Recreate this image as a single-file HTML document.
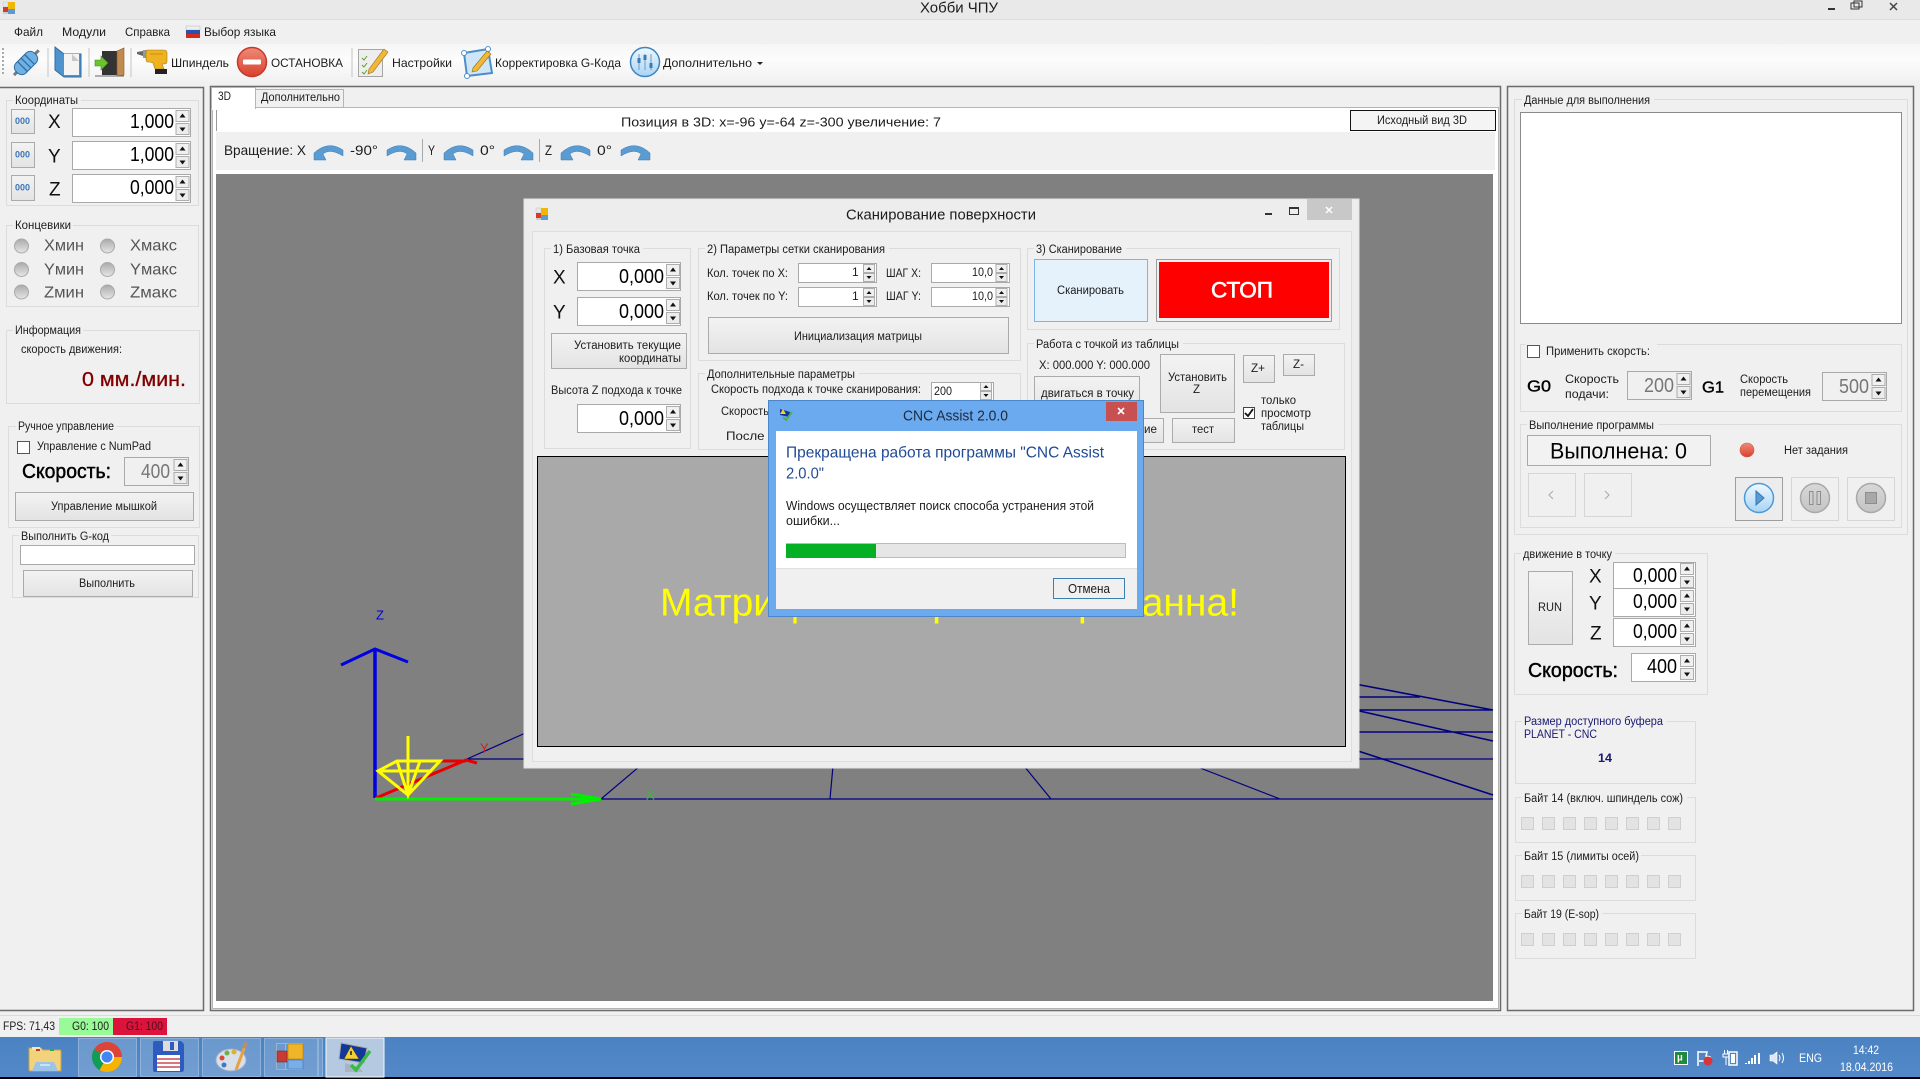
<!DOCTYPE html>
<html lang="ru"><head><meta charset="utf-8"><title>Хобби ЧПУ</title>
<style>
html,body{margin:0;padding:0;background:#f0f0f0;overflow:hidden}
svg{display:block;font-family:"Liberation Sans","Noto Sans CJK SC",sans-serif}
text{dominant-baseline:central;font-size:12px;fill:#1c1c1c}
.g{fill:none;stroke:#dcdcdc}
.b{fill:url(#btn);stroke:#ababab}
.i{fill:#fff;stroke:#a9a9a9}
.n{font-size:20px;fill:#000;transform:translateY(1px)}
.d{font-size:20px;fill:#777;transform:translateY(1px)}
.a{font-size:19px;fill:#111;transform:translateY(1px)}
.l{font-size:16px;fill:#555}
.s{font-size:11.5px;transform:translateY(1px)}
.m{font-size:20px;fill:#000;stroke:#000;stroke-width:.45px}
.nv{stroke:#000080;fill:none}
</style></head><body>
<svg width="1920" height="1079" viewBox="0 0 1920 1079" xmlns="http://www.w3.org/2000/svg">
<defs>
<linearGradient id="btn" x1="0" y1="0" x2="0" y2="1"><stop offset="0" stop-color="#f3f3f3"/><stop offset="1" stop-color="#e3e3e3"/></linearGradient>
<linearGradient id="tb" x1="0" y1="0" x2="0" y2="1"><stop offset="0" stop-color="#f6f6f6"/><stop offset=".4" stop-color="#fcfcfc"/><stop offset="1" stop-color="#f0f0f0"/></linearGradient>
<linearGradient id="ro" x1="0" y1="0" x2="0" y2="1"><stop offset="0" stop-color="#f08a78"/><stop offset="1" stop-color="#d9402e"/></linearGradient>
<linearGradient id="bl" x1="0" y1="0" x2="0" y2="1"><stop offset="0" stop-color="#f0f8ff"/><stop offset="1" stop-color="#a8d4f5"/></linearGradient>
<linearGradient id="gr" x1="0" y1="0" x2="0" y2="1"><stop offset="0" stop-color="#d8d8d8"/><stop offset="1" stop-color="#c4c4c4"/></linearGradient>
<linearGradient id="rad" x1="0" y1="0" x2="0" y2="1"><stop offset="0" stop-color="#aaa"/><stop offset="1" stop-color="#e6e6e6"/></linearGradient>
<linearGradient id="task" x1="0" y1="0" x2="0" y2="1"><stop offset="0" stop-color="#4b82c2"/><stop offset="1" stop-color="#5389c8"/></linearGradient>
<g id="sp"><rect x=".5" y=".5" width="13" height="11" fill="#f0f0f0" stroke="#adadad"/><rect x=".5" y="13.500" width="13" height="11" fill="#ececec" stroke="#adadad"/><path d="M4 7.500h6l-3-4zM4 17.500h6l-3 4z" fill="#111"/></g>
<g id="ss"><rect x=".5" y=".5" width="11" height="8" fill="#f0f0f0" stroke="#adadad"/><rect x=".5" y="9.500" width="11" height="8" fill="#ececec" stroke="#adadad"/><path d="M3.500 6h5l-2.500-3zM3.500 12h5l-2.500 3z" fill="#111"/></g>
<g id="rl"><path d="M0 17V10Q14-3 29 7L29 13Q16 5 9 11L12 17Z" fill="#5a9bd2" stroke="#3d7cb0" stroke-width=".5"/></g>
<g id="rr"><path d="M29 17V10Q15-3 0 7L0 13Q13 5 20 11L17 17Z" fill="#5a9bd2" stroke="#3d7cb0" stroke-width=".5"/></g>
<g id="sq"><rect x="1521.500" y=".5" width="12" height="12"/><rect x="1542.500" y=".5" width="12" height="12"/><rect x="1563.500" y=".5" width="12" height="12"/><rect x="1584.500" y=".5" width="12" height="12"/><rect x="1605.500" y=".5" width="12" height="12"/><rect x="1626.500" y=".5" width="12" height="12"/><rect x="1647.500" y=".5" width="12" height="12"/><rect x="1668.500" y=".5" width="12" height="12"/></g>
<g id="ico"><rect x="0" y="0" width="5" height="5" fill="#e8e8e8" stroke="#bbb" stroke-width=".4"/><rect x="0" y="5" width="5" height="5" fill="#d53a2a"/><rect x="5" y="0" width="7" height="7" fill="#f2b705"/><rect x="5" y="7" width="7" height="5" fill="#5b9bd5"/><rect x="0" y="10" width="5" height="2" fill="#ccc"/></g>
</defs>

<rect width="1920" height="1079" fill="#f0f0f0"/>
<!-- title bar -->
<rect width="1920" height="19" fill="#e9e9e9"/><rect y="19" width="1920" height="1" fill="#dcdcdc"/>
<use href="#ico" x="3" y="2"/>
<text x="920" y="8" textLength="78" lengthAdjust="spacingAndGlyphs" style="font-size:15px">Хобби ЧПУ</text>
<rect x="1828" y="8" width="7" height="2" fill="#333"/>
<rect x="1851" y="3" width="8" height="6" fill="none" stroke="#333"/><rect x="1854" y="1" width="8" height="6" fill="none" stroke="#333"/>
<path d="M1890 3l7 7M1897 3l-7 7" stroke="#444" stroke-width="1.500"/>
<!-- menu -->
<text x="14" y="32" textLength="29" lengthAdjust="spacingAndGlyphs">Файл</text>
<text x="62" y="32" textLength="44" lengthAdjust="spacingAndGlyphs">Модули</text>
<text x="125" y="32" textLength="45" lengthAdjust="spacingAndGlyphs">Справка</text>
<rect x="186" y="26" width="14" height="4" fill="#eee" stroke="#aaa" stroke-width=".4"/><rect x="186" y="30" width="14" height="4" fill="#2a50b0"/><rect x="186" y="34" width="14" height="4" fill="#d52b1e"/>
<text x="204" y="32" textLength="72" lengthAdjust="spacingAndGlyphs">Выбор языка</text>
<!-- toolbar -->
<rect y="44" width="1920" height="40" fill="url(#tb)"/>
<path d="M3 48v28" stroke="#aaa" stroke-dasharray="2 2" stroke-width="2"/>
<path d="M48 48v29M89 48v29M131 48v29M352 48v29" stroke="#c4c4c4"/>
<!-- plug -->
<g transform="rotate(-45 26 63)"><path d="M9 63h5M38 63h6" stroke="#7a7a7a" stroke-width="3"/><rect x="13" y="56" width="26" height="14" rx="6" fill="#6fb1e4" stroke="#2f6da3"/><path d="M21 56v14M26 56v14M31 56v14" stroke="#2f6da3" stroke-width="1.300"/></g>
<!-- doc -->
<path d="M55 47l9 7h17v23H64l-9-7z" fill="#4f93cc" stroke="#2f6da3"/><path d="M64 54h15v21H64z" fill="#f4f4f4"/><path d="M72 54l7 7h-7z" fill="#c8c8c8"/>
<!-- door -->
<rect x="102" y="51" width="17" height="24" fill="#333"/><path d="M117 51l7-3v27l-7 1z" fill="#c08a50" stroke="#8a5c2c" stroke-width=".6"/><path d="M95 60h6v-4l7 7-7 7v-4h-6z" fill="#6bc42e" stroke="#3f8a18" stroke-width=".6"/><path d="M95 76h29" stroke="#666"/>
<!-- drill -->
<path d="M137 52l6-1v5l-6-2z" fill="#666"/><path d="M143 50h4v8h-4z" fill="#999"/>
<path d="M147 50h17q3 0 3 3v8q0 3-3 3h-2l2 5h-9l-2-6-3-1h-3l-1-2v-8z" fill="#efb322" stroke="#a67a0c" stroke-width=".6"/><rect x="155" y="69" width="12" height="5" fill="#222"/><path d="M150 54h13" stroke="#c98e10"/>
<text x="171" y="63" textLength="58" lengthAdjust="spacingAndGlyphs">Шпиндель</text>
<circle cx="252" cy="62" r="14.500" fill="url(#ro)" stroke="#c23a2c" stroke-width="1.500"/><rect x="243" y="59.500" width="18" height="5" rx="1" fill="#fff"/>
<text x="271" y="63" textLength="72" lengthAdjust="spacingAndGlyphs">ОСТАНОВКА</text>
<!-- settings -->
<rect x="358.500" y="49.500" width="24" height="27" fill="#eee" stroke="#a5a5a5"/><path d="M362 58l2 2 3-4M362 65l2 2 3-4M362 72l2 2 3-4" stroke="#5aa02c" fill="none"/><path d="M369 69l15-20 4 3-15 20-5 2z" fill="#f0b83a" stroke="#9c6f14" stroke-width=".6"/>
<text x="392" y="63" textLength="60" lengthAdjust="spacingAndGlyphs">Настройки</text>
<!-- correction -->
<path d="M464 53l24-4 4 24-25 3z" fill="#cfe6f8" stroke="#4b8ec8" stroke-width="2"/><circle cx="464" cy="53" r="2.500" fill="#fff" stroke="#4b8ec8"/><circle cx="467" cy="76" r="2.500" fill="#fff" stroke="#4b8ec8"/><circle cx="488" cy="49" r="2.500" fill="#fff" stroke="#4b8ec8"/><path d="M473 68l14-17 4 3-14 17-5 1z" fill="#f0b83a" stroke="#9c6f14" stroke-width=".6"/>
<text x="495" y="63" textLength="126" lengthAdjust="spacingAndGlyphs">Корректировка G-Кода</text>
<circle cx="645" cy="62" r="14.500" fill="url(#bl)" stroke="#3d85c0" stroke-width="1.500"/><path d="M639 54v16M645 54v16M651 54v16" stroke="#6a9cc8"/><rect x="637.500" y="58" width="3" height="5" fill="#3d7cb0"/><rect x="643.500" y="55" width="3" height="5" fill="#3d7cb0"/><rect x="649.500" y="63" width="3" height="5" fill="#3d7cb0"/>
<text x="663" y="63" textLength="89" lengthAdjust="spacingAndGlyphs">Дополнительно</text>
<path d="M757 62h6l-3 3z" fill="#222"/>

<!-- left panel -->
<path d="M0 87.500H203.500V1010.500H0" fill="#f0f0f0" stroke="#6b6b6b" stroke-width="1.500"/>
<rect x="6.500" y="100.500" width="192" height="105" class="g"/><rect x="13" y="95" width="68" height="10" fill="#f0f0f0"/>
<text x="15" y="100" textLength="63" lengthAdjust="spacingAndGlyphs" class="s">Координаты</text>
<rect x="11.500" y="109.500" width="23" height="24" class="b"/><rect x="11.500" y="142.500" width="23" height="25" class="b"/><rect x="11.500" y="175.500" width="23" height="25" class="b"/>
<text x="15" y="121" textLength="15" lengthAdjust="spacingAndGlyphs" style="font-size:9px;font-weight:bold;fill:#3a75b8">000</text>
<text x="15" y="154.500" textLength="15" lengthAdjust="spacingAndGlyphs" style="font-size:9px;font-weight:bold;fill:#3a75b8">000</text>
<text x="15" y="187.500" textLength="15" lengthAdjust="spacingAndGlyphs" style="font-size:9px;font-weight:bold;fill:#3a75b8">000</text>
<text x="48" y="121.500" class="a">X</text><text x="48" y="156" class="a">Y</text><text x="49" y="189" class="a">Z</text>
<rect x="72.500" y="108.500" width="118" height="28" class="i"/><rect x="72.500" y="141.500" width="118" height="28" class="i"/><rect x="72.500" y="174.500" width="118" height="28" class="i"/>
<text x="130" y="121" textLength="44" lengthAdjust="spacingAndGlyphs" class="n">1,000</text>
<text x="130" y="154" textLength="44" lengthAdjust="spacingAndGlyphs" class="n">1,000</text>
<text x="130" y="187" textLength="44" lengthAdjust="spacingAndGlyphs" class="n">0,000</text>
<use href="#sp" x="175.500" y="110"/><use href="#sp" x="175.500" y="143"/><use href="#sp" x="175.500" y="176"/>

<rect x="6.500" y="225.500" width="192" height="81" class="g"/><rect x="13" y="220" width="60" height="10" fill="#f0f0f0"/>
<text x="15" y="225" textLength="56" lengthAdjust="spacingAndGlyphs" class="s">Концевики</text>
<g fill="url(#rad)" stroke="#a8a8a8"><circle cx="21.500" cy="246" r="7"/><circle cx="21.500" cy="269.500" r="7"/><circle cx="21.500" cy="292" r="7"/><circle cx="107.500" cy="246" r="7"/><circle cx="107.500" cy="269.500" r="7"/><circle cx="107.500" cy="292" r="7"/></g>
<text x="44" y="246" textLength="40" lengthAdjust="spacingAndGlyphs" class="l">Хмин</text>
<text x="44" y="270" textLength="40" lengthAdjust="spacingAndGlyphs" class="l">Yмин</text>
<text x="44" y="293" textLength="40" lengthAdjust="spacingAndGlyphs" class="l">Zмин</text>
<text x="130" y="246" textLength="47" lengthAdjust="spacingAndGlyphs" class="l">Хмакс</text>
<text x="130" y="270" textLength="47" lengthAdjust="spacingAndGlyphs" class="l">Yмакс</text>
<text x="130" y="293" textLength="47" lengthAdjust="spacingAndGlyphs" class="l">Zмакс</text>

<rect x="6.500" y="330.500" width="193" height="73" class="g"/><rect x="13" y="325" width="70" height="10" fill="#f0f0f0"/>
<text x="15" y="330" textLength="66" lengthAdjust="spacingAndGlyphs" class="s">Информация</text>
<text x="21" y="349" textLength="101" lengthAdjust="spacingAndGlyphs" class="s">скорость движения:</text>
<text x="82" y="380" textLength="104" lengthAdjust="spacingAndGlyphs" style="font-size:20px;fill:#800000;stroke:#800000;stroke-width:.3px">0 мм./мин.</text>

<rect x="8.500" y="426.500" width="191" height="101" class="g"/><rect x="16" y="421" width="100" height="10" fill="#f0f0f0"/>
<text x="18" y="426" textLength="96" lengthAdjust="spacingAndGlyphs" class="s">Ручное управление</text>
<rect x="17.500" y="441.500" width="12" height="12" class="i" style="stroke:#555"/>
<text x="37" y="446" textLength="114" lengthAdjust="spacingAndGlyphs" class="s">Управление с NumPad</text>
<text x="22" y="472" textLength="89" lengthAdjust="spacingAndGlyphs" class="m">Скорость:</text>
<rect x="124.500" y="457.500" width="64" height="28" fill="#f0f0f0" stroke="#a9a9a9"/>
<text x="141" y="471" textLength="29" lengthAdjust="spacingAndGlyphs" class="d">400</text>
<use href="#sp" x="173.500" y="459"/>
<rect x="15.500" y="492.500" width="178" height="28" class="b"/>
<text x="51" y="506" textLength="106" lengthAdjust="spacingAndGlyphs" class="s">Управление мышкой</text>

<rect x="12.500" y="535.500" width="186" height="62" class="g"/><rect x="19" y="531" width="92" height="10" fill="#f0f0f0"/>
<text x="21" y="536" textLength="88" lengthAdjust="spacingAndGlyphs" class="s">Выполнить G-код</text>
<rect x="20.500" y="545.500" width="174" height="19" class="i"/>
<rect x="23.500" y="570.500" width="169" height="26" class="b"/>
<text x="79" y="583" textLength="56" lengthAdjust="spacingAndGlyphs" class="s">Выполнить</text>

<!-- main panel -->
<rect x="210.500" y="86.500" width="1290" height="924" fill="#f0f0f0" stroke="#6b6b6b" stroke-width="1.500"/>
<rect x="212.500" y="107.500" width="1286" height="901" fill="#fff" stroke="#b5b5b5"/>
<rect x="255.500" y="89.500" width="88" height="18" fill="#f0f0f0" stroke="#b5b5b5"/>
<rect x="211.500" y="87.500" width="44" height="21" fill="#fff" stroke="#b5b5b5"/><rect x="212" y="106" width="43" height="4" fill="#fff"/>
<text x="218" y="96" textLength="13" lengthAdjust="spacingAndGlyphs" class="s">3D</text>
<text x="261" y="97" textLength="79" lengthAdjust="spacingAndGlyphs" class="s">Дополнительно</text>
<path d="M216.500 110v21" stroke="#999"/>
<text x="621" y="122" textLength="320" lengthAdjust="spacingAndGlyphs" style="font-size:13px">Позиция в 3D: x=-96 y=-64 z=-300 увеличение: 7</text>
<rect x="1350.500" y="110.500" width="145" height="20" fill="#f4f4f4" stroke="#111"/>
<text x="1377" y="120" textLength="90" lengthAdjust="spacingAndGlyphs" class="s">Исходный вид 3D</text>
<rect x="216" y="132" width="1279" height="38" fill="#f0f0f0"/>
<text x="224" y="150" textLength="82" lengthAdjust="spacingAndGlyphs" style="font-size:14px">Вращение: X</text>
<use href="#rl" x="314" y="143"/><text x="350" y="150" textLength="28" lengthAdjust="spacingAndGlyphs" style="font-size:14px">-90°</text><use href="#rr" x="387" y="143"/>
<path d="M422.500 139v23M539.500 139v23" stroke="#aaa"/>
<text x="428" y="150" textLength="7" lengthAdjust="spacingAndGlyphs" style="font-size:14px">Y</text>
<use href="#rl" x="444" y="143"/><text x="480" y="150" textLength="15" lengthAdjust="spacingAndGlyphs" style="font-size:14px">0°</text><use href="#rr" x="504" y="143"/>
<text x="545" y="150" textLength="7" lengthAdjust="spacingAndGlyphs" style="font-size:14px">Z</text>
<use href="#rl" x="561" y="143"/><text x="597" y="150" textLength="15" lengthAdjust="spacingAndGlyphs" style="font-size:14px">0°</text><use href="#rr" x="621" y="143"/>

<!-- canvas -->
<rect x="216" y="174" width="1277" height="827" fill="#808080"/>
<g class="nv"><path d="M467 759L530 731M467 759H530M601 799H1493M601 799L640 766M830 799L833 766M1051 799L1024 766M1280 799L1195 766" stroke-width="1.200"/>
<path d="M1355 684L1493 710M1355 697H1420M1355 710H1493M1355 710L1493 741M1355 732H1493M1355 750L1493 795" stroke-width="1.600"/><path d="M1355 759H1493" stroke-width="1.200"/></g>
<path d="M375 798V650" stroke="#0000e0" stroke-width="3.500" fill="none"/>
<path d="M341 665L375 649L408 662" stroke="#0000e0" stroke-width="3" fill="none"/>
<text x="376" y="615" textLength="8" lengthAdjust="spacingAndGlyphs" style="font-size:13px;fill:#0000d8">Z</text>
<path d="M376 798L466 760L477 763M440 761H466" stroke="#e80000" stroke-width="3" fill="none"/>
<text x="480" y="748" style="font-size:13px;fill:#d02020">Y</text>
<path d="M375 799H601M571 794L601 799L571 804" stroke="#00f000" stroke-width="3" fill="none"/>
<text x="646" y="795" style="font-size:13px;fill:#30c030">X</text>
<path d="M408 736V795M378 771L397 761H440L408 795ZM378 771H432M397 761L408 795L420 761" stroke="#ffff00" stroke-width="3" fill="none"/>

<!-- scan window -->
<rect x="524" y="199" width="835" height="569" fill="#ededed" stroke="#e4e4e4"/>
<use href="#ico" x="536" y="208"/>
<text x="846" y="215" textLength="190" lengthAdjust="spacingAndGlyphs" style="font-size:15px">Сканирование поверхности</text>
<rect x="1265" y="213" width="7" height="2" fill="#333"/><rect x="1289.500" y="207.500" width="9" height="7" fill="none" stroke="#333"/><rect x="1289" y="207" width="10" height="2" fill="#333"/>
<rect x="1307" y="199" width="45" height="21" fill="#c8c8c8"/><path d="M1326 207l6 6M1332 207l-6 6" stroke="#fff" stroke-width="1.500"/>
<rect x="532.500" y="231.500" width="819" height="530" fill="#f0f0f0" stroke="#dedede"/>

<rect x="544.500" y="248.500" width="146" height="200" class="g"/><rect x="551" y="244" width="92" height="10" fill="#f0f0f0"/>
<text x="553" y="249" textLength="87" lengthAdjust="spacingAndGlyphs" class="s">1) Базовая точка</text>
<text x="553" y="277" class="a">X</text><text x="553" y="312" class="a">Y</text>
<rect x="577.500" y="262.500" width="103" height="28" class="i"/><rect x="577.500" y="297.500" width="103" height="28" class="i"/><rect x="577.500" y="404.500" width="103" height="28" class="i"/>
<text x="619" y="276" textLength="45" lengthAdjust="spacingAndGlyphs" class="n">0,000</text>
<text x="619" y="311" textLength="45" lengthAdjust="spacingAndGlyphs" class="n">0,000</text>
<text x="619" y="418" textLength="45" lengthAdjust="spacingAndGlyphs" class="n">0,000</text>
<use href="#sp" x="666" y="264"/><use href="#sp" x="666" y="299"/><use href="#sp" x="666" y="406"/>
<rect x="551.500" y="333.500" width="135" height="35" class="b"/>
<text x="574" y="345" textLength="107" lengthAdjust="spacingAndGlyphs" class="s">Установить текущие</text>
<text x="619" y="358" textLength="62" lengthAdjust="spacingAndGlyphs" class="s">координаты</text>
<text x="551" y="390" textLength="131" lengthAdjust="spacingAndGlyphs" class="s">Высота Z подхода к точке</text>

<rect x="698.500" y="248.500" width="322" height="112" class="g"/><rect x="705" y="244" width="184" height="10" fill="#f0f0f0"/>
<text x="707" y="249" textLength="178" lengthAdjust="spacingAndGlyphs" class="s">2) Параметры сетки сканирования</text>
<text x="707" y="273" textLength="81" lengthAdjust="spacingAndGlyphs" class="s">Кол. точек по X:</text>
<text x="707" y="296" textLength="81" lengthAdjust="spacingAndGlyphs" class="s">Кол. точек по Y:</text>
<text x="886" y="273" textLength="35" lengthAdjust="spacingAndGlyphs" class="s">ШАГ X:</text>
<text x="886" y="296" textLength="35" lengthAdjust="spacingAndGlyphs" class="s">ШАГ Y:</text>
<rect x="798.500" y="263.500" width="78" height="19" class="i"/><rect x="798.500" y="287.500" width="78" height="19" class="i"/><rect x="931.500" y="263.500" width="78" height="19" class="i"/><rect x="931.500" y="287.500" width="78" height="19" class="i"/>
<text x="852" y="272" style="font-size:12px">1</text><text x="852" y="296" style="font-size:12px">1</text>
<text x="972" y="272" textLength="21" lengthAdjust="spacingAndGlyphs">10,0</text><text x="972" y="296" textLength="21" lengthAdjust="spacingAndGlyphs">10,0</text>
<use href="#ss" x="863" y="264"/><use href="#ss" x="863" y="288"/><use href="#ss" x="995.500" y="264"/><use href="#ss" x="995.500" y="288"/>
<rect x="708.500" y="317.500" width="300" height="36" class="b"/>
<text x="794" y="336" textLength="128" lengthAdjust="spacingAndGlyphs" class="s">Инициализация матрицы</text>

<rect x="698.500" y="373.500" width="322" height="76" class="g"/><rect x="705" y="369" width="154" height="10" fill="#f0f0f0"/>
<text x="707" y="374" textLength="148" lengthAdjust="spacingAndGlyphs" class="s">Дополнительные параметры</text>
<text x="711" y="389" textLength="210" lengthAdjust="spacingAndGlyphs" class="s">Скорость подхода к точке сканирования:</text>
<rect x="931.500" y="382.500" width="62" height="18" class="i"/><text x="934" y="391" textLength="18" lengthAdjust="spacingAndGlyphs">200</text><use href="#ss" x="980" y="382"/>
<text x="721" y="411" textLength="48" lengthAdjust="spacingAndGlyphs" class="s">Скорость</text>
<text x="726" y="436" textLength="48" lengthAdjust="spacingAndGlyphs" class="s">После к</text>

<rect x="1027.500" y="248.500" width="312" height="81" class="g"/><rect x="1034" y="244" width="92" height="10" fill="#f0f0f0"/>
<text x="1036" y="249" textLength="86" lengthAdjust="spacingAndGlyphs" class="s">3) Сканирование</text>
<rect x="1034.500" y="259.500" width="113" height="62" fill="#e5f1fb" stroke="#7eb4ea"/>
<text x="1057" y="290" textLength="67" lengthAdjust="spacingAndGlyphs" class="s">Сканировать</text>
<rect x="1156.500" y="259.500" width="175" height="62" fill="#f0f0f0" stroke="#9e9e9e"/><rect x="1159" y="262" width="170" height="56" fill="#fe0000"/>
<text x="1211" y="290" textLength="62" lengthAdjust="spacingAndGlyphs" style="font-size:22px;fill:#fff;stroke:#fff;stroke-width:.6px">СТОП</text>

<rect x="1027.500" y="343.500" width="317" height="106" class="g"/><rect x="1034" y="339" width="149" height="10" fill="#f0f0f0"/>
<text x="1036" y="344" textLength="143" lengthAdjust="spacingAndGlyphs" class="s">Работа с точкой из таблицы</text>
<text x="1039" y="365" textLength="111" lengthAdjust="spacingAndGlyphs" class="s">X: 000.000  Y: 000.000</text>
<rect x="1034.500" y="376.500" width="105" height="40" class="b"/>
<text x="1041" y="393" textLength="93" lengthAdjust="spacingAndGlyphs" class="s">двигаться в точку</text>
<rect x="1160.500" y="354.500" width="74" height="58" class="b"/>
<text x="1168" y="377" textLength="59" lengthAdjust="spacingAndGlyphs" class="s">Установить</text>
<text x="1193" y="389" class="s">Z</text>
<rect x="1243.500" y="355.500" width="31" height="27" class="b"/><text x="1251" y="368" textLength="14" lengthAdjust="spacingAndGlyphs" class="s">Z+</text>
<rect x="1283.500" y="354.500" width="31" height="21" class="b"/><text x="1293" y="364" textLength="11" lengthAdjust="spacingAndGlyphs" class="s">Z-</text>
<rect x="1100.500" y="418.500" width="63" height="24" class="b"/><text x="1144" y="429" textLength="13" lengthAdjust="spacingAndGlyphs" class="s">ие</text>
<rect x="1172.500" y="418.500" width="62" height="24" class="b"/><text x="1192" y="429" textLength="22" lengthAdjust="spacingAndGlyphs" class="s">тест</text>
<rect x="1243.500" y="407.500" width="11" height="11" class="i" style="stroke:#444"/><path d="M1245 413l3 3 5-7" fill="none" stroke="#111" stroke-width="1.800"/>
<text x="1261" y="400" textLength="35" lengthAdjust="spacingAndGlyphs" class="s">только</text>
<text x="1261" y="413" textLength="50" lengthAdjust="spacingAndGlyphs" class="s">просмотр</text>
<text x="1261" y="426" textLength="43" lengthAdjust="spacingAndGlyphs" class="s">таблицы</text>

<rect x="537.500" y="456.500" width="808" height="290" fill="#a9a9a9" stroke="#000"/>
<text x="660" y="603" style="font-size:39px;fill:#ffff00">Матрица</text>
<text x="1239" y="603" text-anchor="end" style="font-size:39px;fill:#ffff00">не просканированна!</text>

<!-- right panel -->
<rect x="1507.500" y="86.500" width="406" height="924" fill="#f0f0f0" stroke="#6b6b6b" stroke-width="1.500"/>
<rect x="1514.500" y="99.500" width="393" height="435" class="g"/><rect x="1522" y="95" width="132" height="10" fill="#f0f0f0"/>
<text x="1524" y="100" textLength="126" lengthAdjust="spacingAndGlyphs" class="s">Данные для выполнения</text>
<rect x="1520.500" y="112.500" width="381" height="211" fill="#fff" stroke="#8a8a8a"/>
<rect x="1520.500" y="344.500" width="381" height="67" class="g"/><rect x="1526" y="340" width="131" height="20" fill="#f0f0f0"/>
<rect x="1527.500" y="345.500" width="12" height="12" class="i" style="stroke:#555"/>
<text x="1546" y="351" textLength="104" lengthAdjust="spacingAndGlyphs" class="s">Применить скорсть:</text>
<text x="1527" y="387" textLength="24" lengthAdjust="spacingAndGlyphs" style="font-size:16px;fill:#000;stroke:#000;stroke-width:.4px">G0</text>
<text x="1702" y="388" textLength="22" lengthAdjust="spacingAndGlyphs" style="font-size:16px;fill:#000;stroke:#000;stroke-width:.4px">G1</text>
<text x="1565" y="379" textLength="54" lengthAdjust="spacingAndGlyphs" class="s">Скорость</text>
<text x="1565" y="394" textLength="44" lengthAdjust="spacingAndGlyphs" class="s">подачи:</text>
<text x="1740" y="379" textLength="48" lengthAdjust="spacingAndGlyphs" class="s">Скорость</text>
<text x="1740" y="392" textLength="71" lengthAdjust="spacingAndGlyphs" class="s">перемещения</text>
<rect x="1627.500" y="371.500" width="64" height="28" fill="#f0f0f0" stroke="#a9a9a9"/><rect x="1822.500" y="372.500" width="64" height="28" fill="#f0f0f0" stroke="#a9a9a9"/>
<text x="1644" y="385" textLength="30" lengthAdjust="spacingAndGlyphs" class="d">200</text><text x="1839" y="386" textLength="30" lengthAdjust="spacingAndGlyphs" class="d">500</text>
<use href="#sp" x="1676.500" y="373"/><use href="#sp" x="1871.500" y="374"/>

<rect x="1520.500" y="424.500" width="381" height="103" class="g"/><rect x="1527" y="420" width="131" height="10" fill="#f0f0f0"/>
<text x="1529" y="425" textLength="125" lengthAdjust="spacingAndGlyphs" class="s">Выполнение программы</text>
<rect x="1527.500" y="435.500" width="183" height="30" fill="#f2f2f2" stroke="#a9a9a9"/>
<text x="1550" y="451" textLength="137" lengthAdjust="spacingAndGlyphs" style="font-size:22px;fill:#000">Выполнена: 0</text>
<circle cx="1747" cy="450" r="7" fill="url(#ro)" stroke="#d0573c" stroke-width=".6"/>
<text x="1784" y="450" textLength="64" lengthAdjust="spacingAndGlyphs" class="s">Нет задания</text>
<g fill="#f0f0f0" stroke="#d6d6d6"><rect x="1528.500" y="473.500" width="47" height="43"/><rect x="1584.500" y="473.500" width="47" height="43"/><rect x="1791.500" y="477.500" width="47" height="43"/><rect x="1847.500" y="477.500" width="47" height="43"/></g>
<path d="M1553 491l-4 4 4 4M1605 491l4 4-4 4" fill="none" stroke="#aaa"/>
<rect x="1735.500" y="477.500" width="47" height="43" fill="#ececec" stroke="#9e9e9e"/>
<circle cx="1759" cy="498" r="14.500" fill="url(#bl)" stroke="#4d9ad8" stroke-width="1.500"/><path d="M1756 491l8 7-8 7z" fill="#5a9bd0" stroke="#2f78b8"/>
<circle cx="1815" cy="498" r="14.500" fill="url(#gr)" stroke="#a8a8a8" stroke-width="1.500"/><path d="M1809.500 491.500h3.500v13h-3.500zM1817 491.500h3.500v13H1817z" fill="#d0d0d0" stroke="#8d8d8d"/>
<circle cx="1871" cy="498" r="14.500" fill="url(#gr)" stroke="#a8a8a8" stroke-width="1.500"/><rect x="1865.500" y="492.500" width="11" height="11" fill="#a8a8a8" stroke="#8d8d8d"/>

<rect x="1514.500" y="553.500" width="193" height="141" class="g"/><rect x="1521" y="549" width="94" height="10" fill="#f0f0f0"/>
<text x="1523" y="554" textLength="89" lengthAdjust="spacingAndGlyphs" class="s">движение в точку</text>
<rect x="1528.500" y="571.500" width="44" height="73" class="b"/>
<text x="1538" y="607" textLength="24" lengthAdjust="spacingAndGlyphs" class="s">RUN</text>
<text x="1589" y="576" class="a">X</text><text x="1589" y="603" class="a">Y</text><text x="1590" y="633" class="a">Z</text>
<rect x="1613.500" y="562.500" width="82" height="26" class="i"/><rect x="1613.500" y="588.500" width="82" height="28" class="i"/><rect x="1613.500" y="618.500" width="82" height="28" class="i"/><rect x="1631.500" y="653.500" width="64" height="28" class="i"/>
<text x="1633" y="575" textLength="44" lengthAdjust="spacingAndGlyphs" class="n">0,000</text>
<text x="1633" y="601" textLength="44" lengthAdjust="spacingAndGlyphs" class="n">0,000</text>
<text x="1633" y="631" textLength="44" lengthAdjust="spacingAndGlyphs" class="n">0,000</text>
<text x="1647" y="666" textLength="30" lengthAdjust="spacingAndGlyphs" class="n">400</text>
<use href="#sp" x="1680" y="563"/><use href="#sp" x="1680" y="590"/><use href="#sp" x="1680" y="620"/><use href="#sp" x="1680" y="655"/>
<text x="1528" y="671" textLength="90" lengthAdjust="spacingAndGlyphs" class="m">Скорость:</text>

<rect x="1515.500" y="721.500" width="180" height="62" class="g"/><rect x="1522" y="716" width="145" height="26" fill="#f0f0f0"/>
<text x="1524" y="722" textLength="139" lengthAdjust="spacingAndGlyphs" style="font-size:11.500px;fill:#191970">Размер доступного буфера</text>
<text x="1524" y="735" textLength="73" lengthAdjust="spacingAndGlyphs" style="font-size:11.500px;fill:#191970">PLANET - CNC</text>
<text x="1598" y="758" textLength="14" lengthAdjust="spacingAndGlyphs" style="font-size:12px;font-weight:bold;fill:#191970">14</text>
<rect x="1515.500" y="797.500" width="180" height="45" class="g"/><rect x="1522" y="793" width="165" height="10" fill="#f0f0f0"/>
<text x="1524" y="798" textLength="159" lengthAdjust="spacingAndGlyphs" class="s">Байт 14 (включ. шпиндель сож)</text>
<rect x="1515.500" y="855.500" width="180" height="45" class="g"/><rect x="1522" y="851" width="119" height="10" fill="#f0f0f0"/>
<text x="1524" y="856" textLength="115" lengthAdjust="spacingAndGlyphs" class="s">Байт 15 (лимиты осей)</text>
<rect x="1515.500" y="913.500" width="180" height="45" class="g"/><rect x="1522" y="909" width="80" height="10" fill="#f0f0f0"/>
<text x="1524" y="914" textLength="75" lengthAdjust="spacingAndGlyphs" class="s">Байт 19 (E-sop)</text>
<g fill="#e3e3e3" stroke="#cfcfcf"><use href="#sq" y="817"/><use href="#sq" y="875"/><use href="#sq" y="933"/></g>

<!-- status bar -->
<rect y="1015" width="1920" height="1" fill="#dadada"/>
<text x="3" y="1026" textLength="52" lengthAdjust="spacingAndGlyphs" class="s">FPS: 71,43</text>
<rect x="59" y="1018" width="54" height="17" fill="#98fb98"/><rect x="113" y="1018" width="54" height="17" fill="#dc143c"/>
<text x="72" y="1026" textLength="37" lengthAdjust="spacingAndGlyphs" class="s">G0: 100</text>
<text x="126" y="1026" textLength="37" lengthAdjust="spacingAndGlyphs" class="s" style="fill:#4a1020">G1: 100</text>

<!-- taskbar -->
<rect y="1037" width="1920" height="40" fill="url(#task)"/><rect y="1077" width="1920" height="2" fill="#000"/>
<g fill="#ffffff" fill-opacity=".18" stroke="#ffffff" stroke-opacity=".3"><rect x="78.500" y="1038.500" width="58" height="38"/><rect x="140.500" y="1038.500" width="58" height="38"/><rect x="202.500" y="1038.500" width="58" height="38"/><rect x="264.500" y="1038.500" width="53" height="38"/><rect x="318.500" y="1038.500" width="4" height="38"/></g>
<rect x="326" y="1038" width="58" height="39" fill="#b5c9e0" stroke="#f2f6fa"/>
<!-- folder -->
<path d="M29 1048h12l2 2h17q1 0 1 2v19H30q-1 0-1-2z" fill="#f2d27a" stroke="#c9a24a"/><path d="M32 1047h8l1 3h-9z" fill="#f7e7b4"/><path d="M36 1062h18l4 9h-26z" fill="#9cc3e8"/><path d="M40 1065h10" stroke="#fff"/>
<rect x="36" y="1049" width="4" height="2" fill="#c33"/><rect x="50" y="1049" width="4" height="2" fill="#3a3"/>
<!-- chrome -->
<circle cx="107" cy="1057" r="15" fill="#db4437"/>
<path d="M107 1057L94 1049.500A15 15 0 0 0 99.500 1070z" fill="#0f9d58"/><path d="M107 1057L99.500 1070A15 15 0 0 0 122 1057z" fill="#f4b400"/>
<path d="M94 1049.500L107 1057L94.500 1064A15 15 0 0 1 94 1049.500z" fill="#0f9d58"/>
<circle cx="107" cy="1057" r="7" fill="#fff"/><circle cx="107" cy="1057" r="5.500" fill="#4285f4"/>
<!-- floppy -->
<path d="M155 1041h26l3 3v25q0 3-3 3h-26q-2 0-2-2v-27q0-2 2-2z" fill="#2d5bbf"/><rect x="163" y="1041" width="15" height="10" fill="#ddd"/><rect x="170" y="1042" width="4" height="8" fill="#2d5bbf"/><rect x="157" y="1055" width="23" height="16" fill="#fff"/><path d="M157 1059h23M157 1063h23M157 1067h23" stroke="#c0272d" stroke-width="1.300"/>
<!-- palette -->
<ellipse cx="231" cy="1060" rx="15" ry="11" fill="#d8dfe8" stroke="#9fb0c4"/><circle cx="222" cy="1058" r="2.500" fill="#d84a3a"/><circle cx="227" cy="1053" r="2.500" fill="#6cb04a"/><circle cx="234" cy="1052" r="2.500" fill="#e0b030"/><circle cx="224" cy="1065" r="2.500" fill="#3a7ac8"/><path d="M236 1070l9-24" stroke="#e8a040" stroke-width="3"/><path d="M244 1048l2-6" stroke="#b09070" stroke-width="4"/>
<!-- blocks -->
<path d="M276 1043.500h27M276 1052.500h27M276 1060.500h27M276 1069.500h27M276.500 1043v27M285.500 1043v27M302.500 1043v27" stroke="#9db3cc" fill="none"/>
<rect x="277" y="1051" width="10" height="11" fill="#c83a32" stroke="#7a1a14" stroke-width=".5"/><rect x="288" y="1044" width="15" height="15" fill="#f0b428" stroke="#a87810" stroke-width=".5"/><rect x="288" y="1060" width="15" height="9" fill="#7aaee8" stroke="#3a6aa8" stroke-width=".5"/>
<!-- wer icon -->
<path d="M341 1043l26 5-3 15-25-4z" fill="#12389a" stroke="#aaa"/><path d="M345 1063l14 4 4 5h-18z" fill="#aab4c0"/><path d="M351 1046l8 13h-15z" fill="#f5cf32" stroke="#333" stroke-width=".5"/><path d="M351 1051v4" stroke="#222" stroke-width="1.500"/><path d="M351 1065l5 5 14-19" fill="none" stroke="#3cb84a" stroke-width="3.500"/>
<!-- tray -->
<rect x="1674" y="1051" width="14" height="14" fill="#fff"/><rect x="1675" y="1052" width="12" height="12" fill="#1f8a3e"/><text x="1677" y="1058" style="font-size:10px;font-weight:bold;fill:#fff">µ</text>
<path d="M1698 1051v15M1698 1052h9l-1 4 4 1v4h-11" fill="none" stroke="#fff" stroke-width="1.500"/><circle cx="1708" cy="1061" r="4.500" fill="#d8343a"/>
<rect x="1729" y="1052" width="8" height="13" fill="none" stroke="#fff" stroke-width="1.500"/><rect x="1731" y="1054" width="4" height="9" fill="#fff"/><path d="M1724.500 1050v4M1727.500 1050v4M1723 1054h6v3h-6zM1726 1057v8" stroke="#fff" fill="none"/>
<path d="M1746 1063v1M1749 1061v3M1752 1058v6M1755 1055v9M1759 1053v11" stroke="#fff" stroke-width="2"/>
<path d="M1770 1055h3l4-3v12l-4-3h-3z" fill="#dfe8f2" stroke="#fff" stroke-width=".6"/><path d="M1779 1055q2 3 0 6M1782 1053q3 5 0 10" stroke="#fff" fill="none"/>
<text x="1799" y="1058" textLength="23" lengthAdjust="spacingAndGlyphs" style="fill:#fff">ENG</text>
<text x="1853" y="1050" textLength="26" lengthAdjust="spacingAndGlyphs" style="fill:#fff">14:42</text>
<text x="1840" y="1067" textLength="53" lengthAdjust="spacingAndGlyphs" style="fill:#fff">18.04.2016</text>

<!-- error dialog -->
<rect x="768.500" y="400.500" width="375" height="216" fill="#6caaf0" stroke="#4a86c8"/>
<rect x="1106" y="402" width="31" height="19" fill="#c75050"/><path d="M1118 408l6 6M1124 408l-6 6" stroke="#fff" stroke-width="1.600"/>
<path d="M780 409l10 3-1 5-9-2z" fill="#12389a"/><path d="M783 417l3 3 6-8" fill="none" stroke="#4cb050" stroke-width="2"/><path d="M783 409l3 5h-6z" fill="#f5cf32"/>
<text x="903" y="416" textLength="105" lengthAdjust="spacingAndGlyphs" style="font-size:15px;fill:#1c2a3c">CNC Assist 2.0.0</text>
<rect x="776" y="431" width="361" height="178" fill="#f0f0f0"/><rect x="776" y="431" width="361" height="137" fill="#fff"/><rect x="776" y="568" width="361" height="1" fill="#dfdfdf"/>
<text x="786" y="453" textLength="318" lengthAdjust="spacingAndGlyphs" style="font-size:16px;fill:#1f4a94">Прекращена работа программы "CNC Assist</text>
<text x="786" y="474" textLength="38" lengthAdjust="spacingAndGlyphs" style="font-size:16px;fill:#1f4a94">2.0.0"</text>
<text x="786" y="506" textLength="308" lengthAdjust="spacingAndGlyphs" style="font-size:12.500px">Windows осуществляет поиск способа устранения этой</text>
<text x="786" y="521" textLength="54" lengthAdjust="spacingAndGlyphs" style="font-size:12.500px">ошибки...</text>
<rect x="786.500" y="543.500" width="339" height="14" fill="#e6e6e6" stroke="#bcbcbc"/><rect x="786" y="544" width="90" height="14" fill="#06b025"/>
<rect x="1053.500" y="578.500" width="71" height="20" fill="#f0f0f0" stroke="#3c7fb1"/>
<text x="1068" y="589" textLength="42" lengthAdjust="spacingAndGlyphs" style="font-size:12.500px">Отмена</text>
</svg>
</body></html>
